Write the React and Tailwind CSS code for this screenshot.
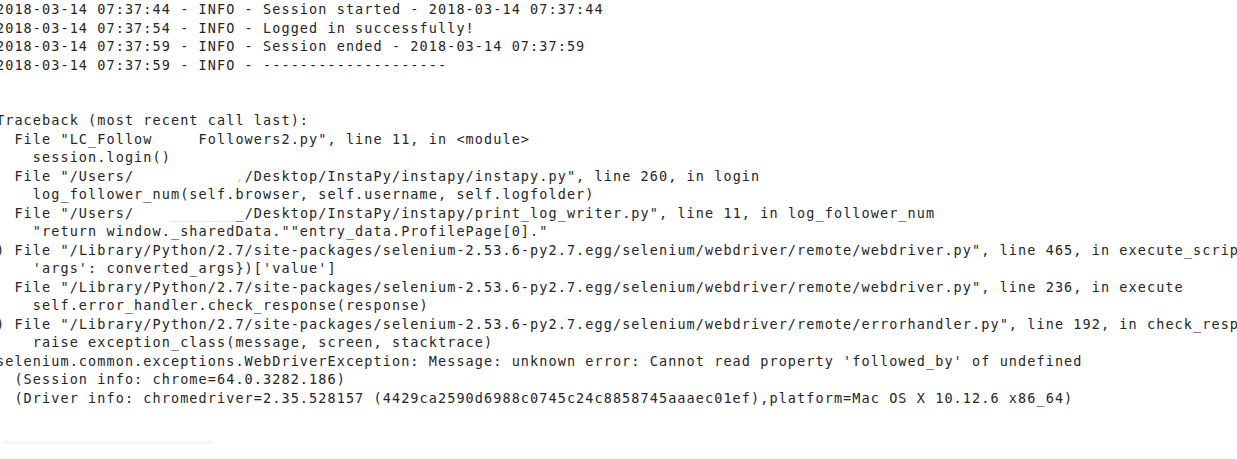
import React from 'react';

const lines = [
  ['2018-03-14 07:37:44 - INFO - Session started - 2018-03-14 07:37:44'],
  ['2018-03-14 07:37:54 - INFO - Logged in successfully!'],
  ['2018-03-14 07:37:59 - INFO - Session ended - 2018-03-14 07:37:59'],
  ['2018-03-14 07:37:59 - INFO - --------------------'],
  [''],
  [''],
  ['Traceback (most recent call last):'],
  ['  File "LC_Follow     Followers2.py", line 11, in <module>'],
  ['    session.login()'],
  ['  File "/Users/           ', { faint: ',' }, '/Desktop/InstaPy/instapy/instapy.py", line 260, in login'],
  ['    log_follower_num(self.browser, self.username, self.logfolder)'],
  ['  File "/Users/    ', { faint: '_______' }, '_/Desktop/InstaPy/instapy/print_log_writer.py", line 11, in log_follower_num'],
  ['    "return window._sharedData.""entry_data.ProfilePage[0]."'],
  [')', ' File "/Library/Python/2.7/site-packages/selenium-2.53.6-py2.7.egg/selenium/webdriver/remote/webdriver.py", line 465, in execute_script'],
  ["    'args': converted_args})['value']"],
  ['  File "/Library/Python/2.7/site-packages/selenium-2.53.6-py2.7.egg/selenium/webdriver/remote/webdriver.py", line 236, in execute'],
  ['    self.error_handler.check_response(response)'],
  [')', ' File "/Library/Python/2.7/site-packages/selenium-2.53.6-py2.7.egg/selenium/webdriver/remote/errorhandler.py", line 192, in check_response'],
  ['    raise exception_class(message, screen, stacktrace)'],
  ["selenium.common.exceptions.WebDriverException: Message: unknown error: Cannot read property 'followed_by' of undefined"],
  ['  (Session info: chrome=64.0.3282.186)'],
  ['  (Driver info: chromedriver=2.35.528157 (4429ca2590d6988c0745c24c8858745aaaec01ef),platform=Mac OS X 10.12.6 x86_64)'],
];

const TermLine = ({ parts }) => (
  <div className="h-[18.5px] whitespace-pre">
    {parts.map((p, i) =>
      typeof p === 'string' ? (
        <span key={i}>{p}</span>
      ) : (
        <span key={i} className="text-[#d6d6d6]">{p.faint}</span>
      )
    )}
  </div>
);

export default function App() {
  return (
    <div className="w-full h-[459px] bg-white overflow-hidden">
      <div className="-ml-[4px] font-['DejaVu_Sans_Mono','Liberation_Mono',monospace] text-[13.5px] leading-[18.5px] tracking-[1.08px] text-[#262626]">
        {lines.map((parts, i) => (
          <TermLine key={i} parts={parts} />
        ))}
      </div>
      <div className="mt-[34px] ml-[3px] w-[210px] h-[3px] bg-[#f5f5f5]" />
    </div>
  );
}
